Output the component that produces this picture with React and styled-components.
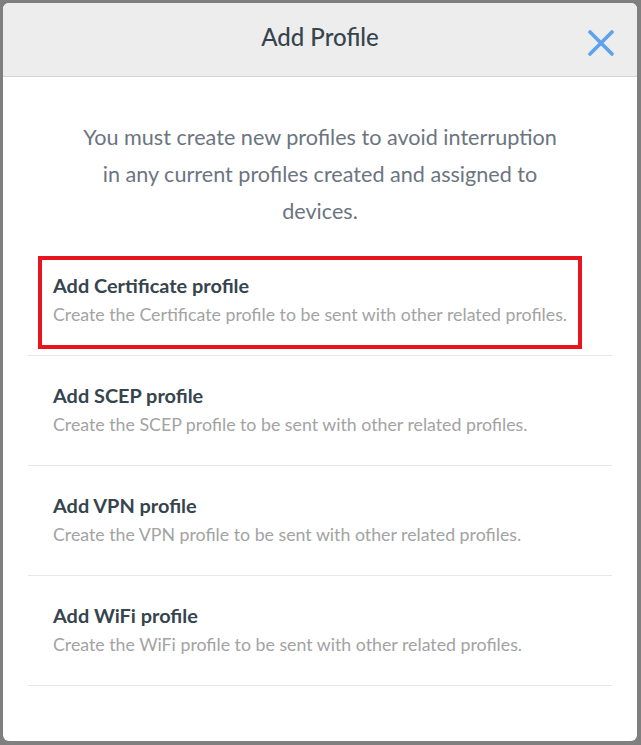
import React from "react";
import styled, { createGlobalStyle } from "styled-components";

const Global = createGlobalStyle`
  html, body { margin: 0; padding: 0; }
  body {
    background: #7f7f7f;
    font-family: Lato, "Open Sans", Arial, sans-serif;
    width: 641px;
    height: 745px;
    overflow: hidden;
  }
`;

const Backdrop = styled.div`
  width: 641px;
  height: 745px;
  padding: 3px 4px 4px 3px;
  box-sizing: border-box;
  background: #7f7f7f;
`;

const Modal = styled.div`
  width: 634px;
  height: 738px;
  background: #ffffff;
  border-radius: 6px;
  overflow: hidden;
  display: flex;
  flex-direction: column;
`;

const Header = styled.div`
  height: 73px;
  flex: none;
  background: #ededed;
  border-bottom: 1px solid #d4d4d4;
  display: flex;
  align-items: center;
  justify-content: center;
  position: relative;
`;

const Title = styled.h2`
  margin: 0;
  font-size: 24px;
  font-weight: 500;
  color: #36444e;
  padding-bottom: 7px;
`;

const CloseButton = styled.button`
  position: absolute;
  right: 22px;
  top: 26px;
  width: 28px;
  height: 28px;
  padding: 0;
  border: none;
  background: transparent;
  cursor: pointer;
  display: flex;
  align-items: center;
  justify-content: center;
`;

const Body = styled.div`
  padding: 42px 25px 0 25px;
  display: flex;
  flex-direction: column;
`;

const Intro = styled.p`
  margin: 0 auto 16px;
  max-width: 490px;
  text-align: center;
  font-size: 21.6px;
  line-height: 37px;
  color: #6b7580;
`;

const List = styled.div`
  display: flex;
  flex-direction: column;
`;

const Item = styled.div`
  position: relative;
  height: 110px;
  box-sizing: border-box;
  padding: 27px 25px 0;
  border-bottom: 1px solid #e8e8e8;
  cursor: pointer;
`;

const ItemTitle = styled.div`
  font-size: 19.9px;
  font-weight: 700;
  line-height: 24px;
  color: #36444e;
`;

const ItemDesc = styled.div`
  margin-top: 5px;
  font-size: 17.75px;
  line-height: 24px;
  color: #a3a3a3;
`;

const Highlight = styled.div`
  position: absolute;
  left: 10px;
  top: 10px;
  width: 544px;
  height: 93px;
  box-sizing: border-box;
  border: 4px solid #e8141e;
  pointer-events: none;
`;

const items = [
  { name: "Certificate", highlight: true },
  { name: "SCEP" },
  { name: "VPN" },
  { name: "WiFi" },
];

export default function App() {
  return (
    <>
      <Global />
      <Backdrop>
        <Modal>
          <Header>
            <Title>Add Profile</Title>
            <CloseButton aria-label="Close">
              <svg width="26" height="26" viewBox="0 0 26 26">
                <path
                  d="M2 2 L24 24 M24 2 L2 24"
                  stroke="#5ca2ee"
                  strokeWidth="3.6"
                  strokeLinecap="round"
                  fill="none"
                />
              </svg>
            </CloseButton>
          </Header>
          <Body>
            <Intro>
              You must create new profiles to avoid interruption in any current
              profiles created and assigned to devices.
            </Intro>
            <List>
              {items.map((it) => (
                <Item key={it.name}>
                  <ItemTitle>Add {it.name} profile</ItemTitle>
                  <ItemDesc>
                    Create the {it.name} profile to be sent with other related
                    profiles.
                  </ItemDesc>
                  {it.highlight && <Highlight />}
                </Item>
              ))}
            </List>
          </Body>
        </Modal>
      </Backdrop>
    </>
  );
}
